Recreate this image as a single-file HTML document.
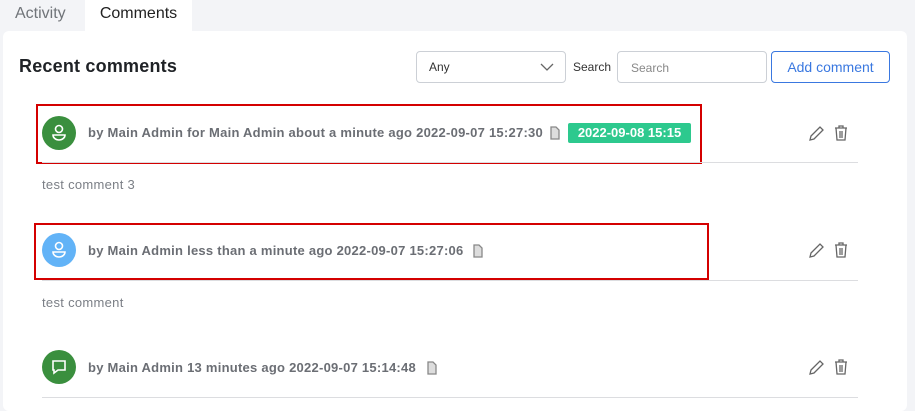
<!DOCTYPE html><html><head><style>
body{margin:0;width:915px;height:400px;background:#f3f4f7;font-family:"Liberation Sans",sans-serif;position:relative;overflow:hidden}
.a{position:absolute}
.tab{top:0;height:31px;line-height:28px;font-size:16px}
.card{left:3px;top:31px;width:904px;height:380px;background:#fff;border-radius:6px}
.meta{font-size:13px;font-weight:bold;color:#6b6e74;white-space:nowrap;letter-spacing:0.25px}
.av{width:34px;height:34px;border-radius:50%}
.line{left:42px;width:816px;height:1px;background:#dcdde0}
.ct{font-size:13px;color:#7b7f86;letter-spacing:0.3px}
.red{border:2px solid #d40000}
</style></head><body>
<div class="a tab" style="left:15px;color:#707479">Activity</div>
<div class="a tab" style="left:85px;width:107px;background:#fff;text-align:center;color:#222">Comments</div>
<div class="a card"></div>
<div class="a" style="left:19px;top:56px;font-size:18px;font-weight:bold;color:#1f2226;letter-spacing:0.2px">Recent comments</div>
<div class="a" style="left:416px;top:51px;width:148px;height:30px;border:1px solid #ccd0d6;border-radius:4px;background:#fff"><span class="a" style="left:12px;top:8px;font-size:12px;color:#333">Any</span><svg class="a" style="left:123px;top:10px" width="14" height="10"><path d="M1 2l6 6 6-6" stroke="#666" fill="none" stroke-width="1.3"/></svg></div>
<div class="a" style="left:573px;top:60px;font-size:12px;color:#333">Search</div>
<div class="a" style="left:617px;top:51px;width:148px;height:30px;border:1px solid #ccd0d6;border-radius:4px;background:#fff"><span class="a" style="left:13px;top:9px;font-size:12px;color:#888">Search</span></div>
<div class="a" style="left:771px;top:51px;width:117px;height:30px;border:1px solid #3a78e0;border-radius:4px;background:#fff;color:#3a78e0;font-size:14px;text-align:center;line-height:30px">Add comment</div>

<div class="a red" style="left:36px;top:104px;width:662px;height:56px"></div>
<div class="a av" style="left:42px;top:116px;background:#3a8f3e"></div>
<svg class="a" style="left:50px;top:124px" width="18" height="18"><circle cx="9" cy="5" r="3.5" stroke="#fff" fill="none" stroke-width="1.6"/><path d="M3 11h12a6 5 0 0 1-12 0z" stroke="#fff" fill="none" stroke-width="1.6"/></svg>
<div class="a meta" style="left:88px;top:125px">by Main Admin for Main Admin about a minute ago 2022-09-07 15:27:30</div>
<svg class="a" style="left:549px;top:126px" width="12" height="14"><path d="M2 1h5l3 3v9H2z" stroke="#888" fill="#ddd" stroke-width="1.3"/></svg>
<div class="a" style="left:568px;top:123px;width:123px;height:20px;background:#2dc98e;border-radius:2px;color:#fff;font-size:13px;font-weight:bold;text-align:center;line-height:20px">2022-09-08 15:15</div>
<div class="a line" style="top:162px"></div>
<div class="a ct" style="left:42px;top:177px">test comment 3</div>

<div class="a red" style="left:34px;top:223px;width:671px;height:53px"></div>
<div class="a av" style="left:42px;top:233px;background:#62b3f7"></div>
<svg class="a" style="left:50px;top:241px" width="18" height="18"><circle cx="9" cy="5" r="3.5" stroke="#fff" fill="none" stroke-width="1.6"/><path d="M3 11h12a6 5 0 0 1-12 0z" stroke="#fff" fill="none" stroke-width="1.6"/></svg>
<div class="a meta" style="left:88px;top:243px">by Main Admin less than a minute ago 2022-09-07 15:27:06</div>
<svg class="a" style="left:472px;top:244px" width="12" height="14"><path d="M2 1h5l3 3v9H2z" stroke="#888" fill="#ddd" stroke-width="1.3"/></svg>
<div class="a line" style="top:280px"></div>
<div class="a ct" style="left:42px;top:295px">test comment</div>

<div class="a av" style="left:42px;top:350px;background:#3a8f3e"></div>
<svg class="a" style="left:50px;top:358px" width="18" height="18"><path d="M3 3h12v9H8l-4 3v-3H3z" stroke="#fff" fill="none" stroke-width="1.6"/></svg>
<div class="a meta" style="left:88px;top:360px">by Main Admin 13 minutes ago 2022-09-07 15:14:48</div>
<svg class="a" style="left:426px;top:361px" width="12" height="14"><path d="M2 1h5l3 3v9H2z" stroke="#888" fill="#ddd" stroke-width="1.3"/></svg>
<div class="a line" style="top:397px"></div>

<svg class="a" style="left:808px;top:124px" width="44" height="280"><g id="ic" stroke="#666" fill="none" stroke-width="1.3"><path d="M2 16l1-4 9-9 3 3-9 9z"/><path d="M27 4h12M31 4v-2h4v2M28 4l1 12h8l1-12M32 7v7M34 7v7"/></g><use href="#ic" y="117"/><use href="#ic" y="234"/></svg>
</body></html>
